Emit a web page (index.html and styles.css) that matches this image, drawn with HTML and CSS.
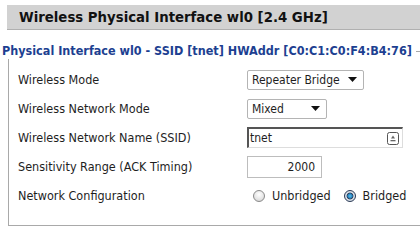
FILE: index.html
```html
<!DOCTYPE html>
<html>
<head>
<meta charset="utf-8">
<link rel="stylesheet" href="styles.css">
</head>
<body>
<div class="page">
  <h2 class="header">Wireless Physical Interface wl0 [2.4 GHz]</h2>
  <fieldset class="box">
    <legend class="legend">Physical Interface wl0 - SSID [tnet] HWAddr [C0:C1:C0:F4:B4:76]</legend>
    <div class="rows">
      <div class="label">Wireless Mode</div>
      <div class="ctl">
        <div class="select sel-mode"><span>Repeater Bridge</span><svg class="arrow" width="9" height="5" viewBox="0 0 9 5"><path d="M0 0H9L4.5 5Z" fill="#111"/></svg></div>
      </div>
      <div class="label">Wireless Network Mode</div>
      <div class="ctl">
        <div class="select sel-net"><span>Mixed</span><svg class="arrow" width="9" height="5" viewBox="0 0 9 5"><path d="M0 0H9L4.5 5Z" fill="#111"/></svg></div>
      </div>
      <div class="label">Wireless Network Name (SSID)</div>
      <div class="ctl">
        <div class="input ssid"><span>tnet</span>
          <svg class="keyicon" width="12" height="13" viewBox="0 0 12 13"><rect x="0.5" y="0.5" width="11" height="12" rx="2" fill="#fff" stroke="#555"/><path d="M6 3.5L8 6.5H4Z" fill="#666"/><rect x="3.5" y="8" width="5" height="1.3" fill="#666"/></svg>
        </div>
      </div>
      <div class="label">Sensitivity Range (ACK Timing)</div>
      <div class="ctl">
        <div class="input ack"><span>2000</span></div>
      </div>
      <div class="label">Network Configuration</div>
      <div class="ctl radios">
        <label class="radio"><span class="dot"></span><span>Unbridged</span></label>
        <label class="radio"><span class="dot on"></span><span>Bridged</span></label>
      </div>
    </div>
  </fieldset>
</div>
</body>
</html>
```
FILE: styles.css
```css
html, body {
  margin: 0;
  padding: 0;
  background: #fff;
  width: 420px;
  height: 236px;
  overflow: hidden;
}
.page {
  width: 420px;
  padding-top: 5px;
  font-family: "DejaVu Sans Condensed", "DejaVu Sans", sans-serif;
  color: #1e1e1e;
}
.header {
  margin: 0 0 0 7px;
  height: 24px;
  line-height: 25px;
  padding-left: 12px;
  background: #d2d2d2;
  border-bottom: 1px solid #b0b0b0;
  font-family: "DejaVu Sans", sans-serif;
  font-weight: bold;
  font-size: 13.3px;
  color: #111;
}
.box {
  margin: 13px 0 0 8px;
  padding: 0 0 15px 9px;
  border: 1px solid #a9a9a9;
  border-right: none;
  min-width: 0;
}
.legend {
  margin-left: -16px;
  padding: 0 4px 0 0;
  font-weight: bold;
  font-size: 12.5px;
  line-height: 16px;
  color: #1d3f91;
}
.rows {
  padding-top: 6px;
  display: grid;
  grid-template-columns: 229px 1fr;
  grid-auto-rows: 29px;
  align-items: center;
  font-size: 12.5px;
}
.label {
  white-space: nowrap;
}
.ctl {
  display: flex;
  align-items: center;
  font-size: 12px;
}
.select {
  box-sizing: border-box;
  height: 20px;
  border: 1px solid #b4b4b4;
  border-radius: 2px;
  background: #fff;
  display: flex;
  align-items: center;
  justify-content: space-between;
  padding: 0 6px 0 4px;
}
.sel-mode { width: 117px; }
.sel-net { width: 80px; }
.arrow { display: block; }
.input {
  box-sizing: border-box;
  background: #fff;
  display: flex;
  align-items: center;
}
.ssid {
  width: 156px;
  height: 21px;
  border-top: 2px solid #555;
  border-left: 2px solid #555;
  border-right: 1px solid #ddd;
  border-bottom: 1px solid #ddd;
  justify-content: space-between;
  padding: 0 3px 0 1px;
}
.keyicon { display: block; }
.ack {
  width: 75px;
  height: 22px;
  border: 1px solid #bdbdbd;
  justify-content: flex-end;
  padding-right: 6px;
}
.radios {
  gap: 13px;
  padding-left: 6px;
  font-size: 12.5px;
}
.radio {
  display: flex;
  align-items: center;
  gap: 7px;
}
.dot {
  box-sizing: border-box;
  width: 12px;
  height: 12px;
  border-radius: 50%;
  border: 1px solid #8a8a8a;
  background: radial-gradient(circle at 50% 35%, #fff 0%, #e4e4e4 60%, #c8c8c8 100%);
}
.dot.on {
  border-color: #2b3a55;
  background: radial-gradient(circle at 50% 50%, #5fc3ea 0%, #1d77b5 35%, #22304a 40%, #dfe6ee 55%, #b9c3cf 100%);
}
```
